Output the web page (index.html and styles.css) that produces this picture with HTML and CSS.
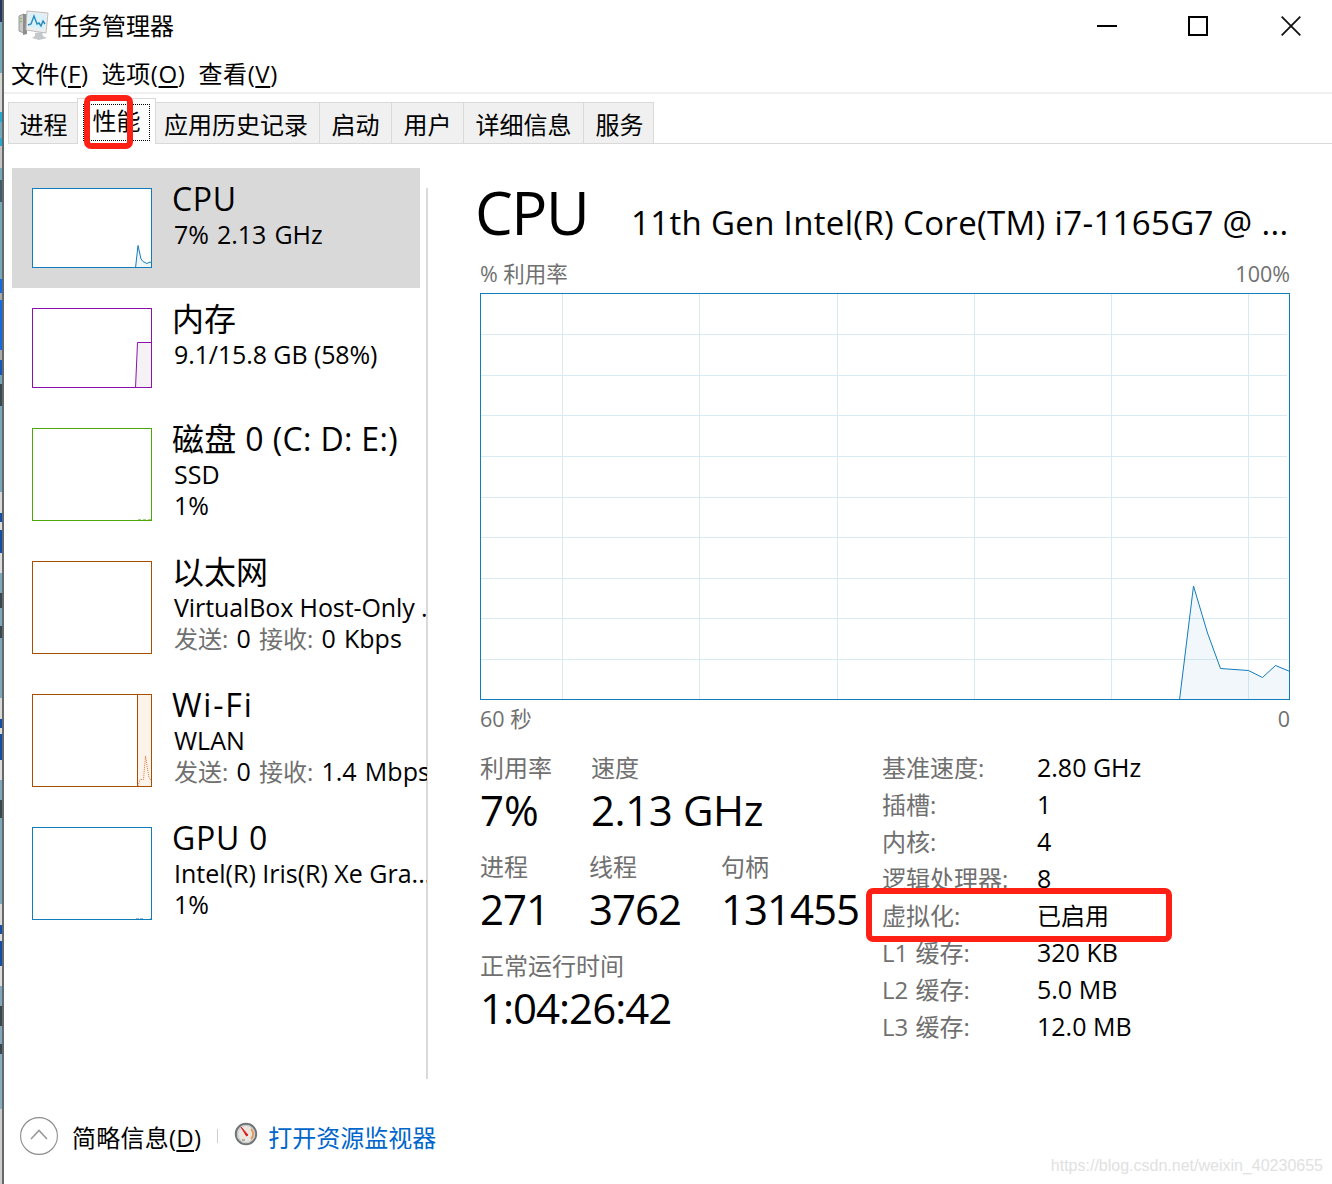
FILE: index.html
```html
<!DOCTYPE html>
<html lang="zh-CN">
  <head>
    <meta charset="UTF-8" />
    <meta name="viewport" content="width=device-width, initial-scale=1.0" />
    <title>任务管理器</title>
    <link rel="stylesheet" href="styles.css">
  </head>
  <body>
    <div class="desktop"></div>
    <div class="window">
      <header class="titlebar">
        <svg class="app-icon" width="32" height="32" viewBox="0 0 32 32">
          <path d="M1 6l5-2v19l-5-2z" fill="#c9c9c9" stroke="#999" />
          <path d="M5 4h4v20l-4 1z" fill="#8d8d8d" />
          <path d="M2 9l2-1M2 12l2-1" stroke="#73b83c" />
          <path d="M17 23l7-1 1 4 4 2-8 2-7-2 3-2z" fill="#c4c8ca" />
          <path d="M9 1l21 2-2 20-20-3z" fill="#eee" stroke="#bcbcbc" />
          <path d="M11 3l17 2-2 15-16-3z" fill="#d8f1fb" />
          <path d="M10 15l3-1 3-8 3 8 2-1 2 3 2-5 2 3" fill="none" stroke="#288bbd" stroke-width="1.4" />
        </svg>
        <span class="app-name">任务管理器</span>
        <div class="controls">
          <svg width="20" height="20"><path d="M0 10h20" stroke="#000" stroke-width="2" /></svg>
          <svg width="20" height="20"><rect x="1" y="1" width="18" height="18" fill="none" stroke="#000" stroke-width="2" /></svg>
          <svg class="close" width="20" height="20"><path d="M.7.7l18.6 18.6M19.3.7L.7 19.3" stroke="#111" stroke-width="1.8" /></svg>
        </div>
      </header>
      <nav class="menu">
        <span>文件(<u>F</u>)</span>
        <span>选项(<u>O</u>)</span>
        <span>查看(<u>V</u>)</span>
      </nav>
      <div class="tabs">
        <div class="tab processes">进程</div>
        <div class="tab active"><span class="focus">性能</span><i class="mark tab-mark"></i></div>
        <div class="tab history">应用历史记录</div>
        <div class="tab">启动</div>
        <div class="tab">用户</div>
        <div class="tab details-tab">详细信息</div>
        <div class="tab services">服务</div>
        <div class="tabs-rest"></div>
      </div>

      <div class="content">
        <aside class="sidebar">
          <div class="item selected">
            <svg class="thumb blue" width="120" height="80">
              <path class="area" d="M103.500 80L106 57.500L109 71L111 73.500L115 75.500L118 74L120 75V80z" />
              <rect x=".5" y=".5" width="119" height="79" />
            </svg>
            <div class="info">
              <h3 class="latin">CPU</h3>
              <p class="cpu">7% 2.13 GHz</p>
            </div>
          </div>
          <div class="item">
            <svg class="thumb purple" width="120" height="80">
              <path class="area" d="M103.500 80L105.500 34.500H120V80z" />
              <rect x=".5" y=".5" width="119" height="79" />
            </svg>
            <div class="info">
              <h3>内存</h3>
              <p class="memory">9.1/15.8 GB (58%)</p>
            </div>
          </div>
          <div class="item tall">
            <svg class="thumb green" width="120" height="93">
              <path d="M106 91.500h3m2 0h3m2 0h3" stroke-opacity=".5" />
              <rect x=".5" y=".5" width="119" height="92" />
            </svg>
            <div class="info">
              <h3 class="disk">磁盘 0 (C: D: E:)</h3>
              <p>SSD</p>
              <p>1%</p>
            </div>
          </div>
          <div class="item tall">
            <svg class="thumb brown" width="120" height="93">
              <rect x=".5" y=".5" width="119" height="92" />
            </svg>
            <div class="info">
              <h3>以太网</h3>
              <p class="adapter">VirtualBox Host-Only ...</p>
              <p class="traffic"><span class="cjk">发送:</span> 0 <span class="cjk">接收:</span> 0 Kbps</p>
            </div>
          </div>
          <div class="item tall">
            <svg class="thumb brown" width="120" height="93">
              <path class="area" d="M105.500 93V.5H120V93z" />
              <path class="dots" d="M106 92L108 85.500H111.500L113.500 62L117 84L119 86" />
              <rect x=".5" y=".5" width="119" height="92" />
            </svg>
            <div class="info">
              <h3 class="wifi">Wi-Fi</h3>
              <p>WLAN</p>
              <p class="traffic"><span class="cjk">发送:</span> 0 <span class="cjk">接收:</span> 1.4 Mbps</p>
            </div>
          </div>
          <div class="item tall">
            <svg class="thumb blue" width="120" height="93">
              <path d="M104 91.500h3m1 0h3m7 0h2" stroke-opacity=".5" />
              <rect x=".5" y=".5" width="119" height="92" />
            </svg>
            <div class="info">
              <h3 class="latin">GPU 0</h3>
              <p>Intel(R) Iris(R) Xe Gra...</p>
              <p>1%</p>
            </div>
          </div>
        </aside>

        <main class="performance">
          <div class="heading">
            <h1>CPU</h1>
            <h2>11th Gen Intel(R) Core(TM) i7-1165G7 @ ...</h2>
          </div>
          <div class="axis axis-top"><span>% 利用率</span><span>100%</span></div>
          <svg class="chart" width="810" height="407">
            <path class="grid" d="M82.500 0V407M219.500 0V407M357.500 0V407M494.500 0V407M631.500 0V407M768.500 0V407M0 41.500H807M0 82.500H807M0 122.500H807M0 163.500H807M0 204.500H807M0 244.500H807M0 285.500H807M0 325.500H807M0 366.500H807" />
            <path class="load" d="M699.500 407L713.500 293L727.500 340L740.500 375.500L768.500 377.500L782.500 384.500L795.500 372.500L810 378.500V407z" />
            <rect x=".5" y=".5" width="809" height="406" />
          </svg>
          <div class="axis axis-bottom"><span>60 秒</span><span>0</span></div>
          <div class="stats">
            <div class="numbers">
              <div class="row">
                <div class="stat usage"><label>利用率</label><b>7%</b></div>
                <div class="stat speed"><label>速度</label><b>2.13 GHz</b></div>
              </div>
              <div class="row">
                <div class="stat count"><label>进程</label><b>271</b></div>
                <div class="stat threads"><label>线程</label><b>3762</b></div>
                <div class="stat"><label>句柄</label><b>131455</b></div>
              </div>
              <div class="row">
                <div class="stat uptime"><label>正常运行时间</label><b>1:04:26:42</b></div>
              </div>
            </div>
            <dl class="details">
              <dt>基准速度:</dt><dd>2.80 GHz</dd>
              <dt>插槽:</dt><dd>1</dd>
              <dt>内核:</dt><dd>4</dd>
              <dt>逻辑处理器:</dt><dd>8</dd>
              <dt>虚拟化:</dt><dd class="cjk-value">已启用</dd>
              <dt>L1 缓存:</dt><dd>320 KB</dd>
              <dt>L2 缓存:</dt><dd>5.0 MB</dd>
              <dt>L3 缓存:</dt><dd>12.0 MB</dd>
              <i class="mark detail-mark"></i>
            </dl>
          </div>
        </main>
      </div>

      <footer class="footer">
        <svg width="38" height="38"><circle cx="19" cy="19" r="18.400" fill="none" stroke="#8c8c8c" stroke-width="1.100" /><path d="M11 22l8-8.500 8 8.500" fill="none" stroke="#999" stroke-width="1.600" /></svg>
        <span class="brief">简略信息(<u>D</u>)</span>
        <span class="separator"></span>
        <svg class="gauge" width="24" height="24" viewBox="0 0 24 24">
          <circle cx="12" cy="12" r="10.200" fill="#e9e7df" stroke="#6f7577" stroke-width="2" />
          <circle cx="12" cy="12" r="8.500" fill="none" stroke="#c5c9ca" />
          <path d="M17 7a7 7 0 0 1 0 10" fill="none" stroke="#e5965c" stroke-width="1.800" />
          <path d="M6 17a7 7 0 0 1 1-10" fill="none" stroke="#bbb" stroke-dasharray="1 2" />
          <path d="M7 5l7 8-1.500 1z" fill="#d92020" stroke="#d92020" />
          <path d="M8 18h3" stroke="#777" />
        </svg>
        <a class="monitor">打开资源监视器</a>
      </footer>
      <span class="watermark">https://blog.csdn.net/weixin_40230655</span>
    </div>
  </body>
</html>
```
FILE: styles.css
```css
* {
  box-sizing: border-box;
}
body {
  display: flex;
  width: 1332px;
  height: 1184px;
  margin: 0;
  overflow: hidden;
  background: #fff;
  color: #000;
  font-family: "Open Sans", "Noto Sans CJK SC", sans-serif;
  font-size: 24px;
}
h1,
h2,
h3,
p,
dl,
dd {
  margin: 0;
  font-weight: 400;
}
/* sliver of the desktop behind the window */
.desktop {
  flex: none;
  width: 4px;
  border-right: 2px solid #65696b;
  background: linear-gradient(
    #26375e 0 22px, #76aabb 22px 73px, #d7d7d2 73px 112px,
    #28a8d0 112px 122px, #76aabb 122px 138px, #28a8d0 138px 146px,
    #c6c4c1 146px 168px, #76aabb 168px 180px, #415c69 180px 202px,
    #76aabb 202px 279px, #1769df 279px 293px, #aaa 293px 300px,
    #1769df 300px 350px, #aaa 350px 360px, #1455b8 360px 375px,
    #76a5b7 375px 384px, #364850 384px 406px, #7ba7ba 406px 492px,
    #d9d9d5 492px 513px, #154ca4 513px 522px, #ddd 522px 530px,
    #154ca4 530px 553px, #ddd 553px 573px, #7fa7bb 573px 593px,
    #38464d 593px 608px, #7fa7bb 608px 626px, #38464d 626px 638px,
    #7fa7bb 638px 698px, #d9d9d5 698px 719px, #154ca4 719px 728px,
    #ddd 728px 734px, #154ca4 734px 760px, #ddd 760px 780px,
    #7fa7bb 780px 800px, #38464d 800px 818px, #7fa7bb 818px 904px,
    #d9d9d5 904px 925px, #154ca4 925px 934px, #ddd 934px 941px,
    #154ca4 941px 966px, #ddd 966px 986px, #81a7bc 986px 1006px,
    #38464d 1006px 1026px, #81a7bc 1026px 1044px, #38464d 1044px 1054px,
    #8aacc0 1054px 1109px, #cecece 1109px
  );
}
.window {
  display: flex;
  flex-direction: column;
  position: relative;
  width: 1328px;
  height: 1184px;
}
.titlebar {
  display: flex;
  flex: none;
  align-items: center;
  height: 52px;
  padding: 0 31px 0 14px;
}
.app-name {
  margin-left: 4px;
  line-height: 48px;
}
.controls {
  display: flex;
  gap: 71px;
  margin-left: auto;
}
.close {
  margin-left: 2px;
}
.menu {
  display: flex;
  flex: none;
  gap: 13px;
  height: 42px;
  padding-left: 7px;
  border-bottom: 2px solid #f0f0f0;
  letter-spacing: 0.6px;
  line-height: 44px;
}
.menu u,
.brief u {
  text-decoration-thickness: 2px;
  text-underline-offset: 3px;
}
.tabs {
  display: flex;
  flex: none;
  align-items: flex-end;
  height: 50px;
  padding-left: 4px;
}
.tab {
  width: 72px;
  height: 42px;
  border: 1px solid #d9d9d9;
  border-left: 0;
  background: #f0f0f0;
  line-height: 43px;
  text-align: center;
}
.processes {
  width: 69px;
  border-left: 1px solid #d9d9d9;
  border-right: 0;
  padding-left: 1px;
}
.active {
  position: relative;
  width: 79px;
  height: 46px;
  padding: 5px 5px 3px;
  border-left: 1px solid #d9d9d9;
  border-bottom: 0;
  background: #fff;
  line-height: 32px;
}
.focus {
  display: block;
  height: 37px;
  border: 1px dotted #000;
}
.history {
  width: 164px;
  padding-right: 3px;
}
.details-tab {
  width: 120px;
}
.services {
  width: 70px;
  padding-left: 2px;
}
.tabs-rest {
  flex: 1;
  border-bottom: 1px solid #d9d9d9;
}
.mark {
  position: absolute;
  border: 6px solid #ff2015;
  border-radius: 7px;
}
.tab-mark {
  left: 6px;
  top: -4px;
  width: 49px;
  height: 54px;
}
.content {
  display: flex;
  flex: none;
  height: 935px;
  padding-top: 24px;
}
.sidebar {
  flex: none;
  width: 424px;
  padding-left: 8px;
  background: linear-gradient(#dadada, #dadada) 422px 20px / 2px 100% no-repeat;
}
.item {
  display: flex;
  width: 415px;
  height: 120px;
  padding: 20px 0 0 20px;
}
.tall {
  height: 133px;
}
.selected {
  width: 408px;
  background: #d9d9d9;
}
.thumb {
  flex: none;
  fill: none;
  background: #fff;
  stroke: currentColor;
}
.blue {
  color: #117dbb;
}
.purple {
  color: #8b12ae;
}
.green {
  color: #4da60c;
}
.brown {
  color: #a74f01;
}
.blue .area {
  fill: #f1f6fa;
}
.purple .area {
  fill: #f4f2f4;
}
.brown .area {
  fill: #fcf3eb;
}
.dots {
  stroke: #d87942;
  stroke-dasharray: 1 1;
}
.info {
  margin: -9px 0 0 20px;
  overflow: hidden;
  white-space: nowrap;
}
.info h3 {
  font-size: 32px;
  line-height: 40px;
}
.info .latin {
  letter-spacing: 0.7px;
}
.info .wifi {
  letter-spacing: 1.8px;
}
.info .disk {
  letter-spacing: 0.35px;
}
.info p {
  padding-left: 2px;
  font-size: 25px;
  line-height: 31px;
}
.info .cpu {
  word-spacing: 1.5px;
}
.info .memory,
.info .adapter {
  letter-spacing: -0.1px;
}
.info .traffic {
  word-spacing: 1.7px;
}
.cjk {
  color: #707070;
  font-size: 24px;
}
.performance {
  width: 810px;
  margin-left: 52px;
}
.heading {
  display: flex;
  align-items: baseline;
  height: 92px;
  white-space: nowrap;
}
.heading h1 {
  width: 156px;
  margin-left: -5px;
  font-size: 60px;
  letter-spacing: -1.5px;
  line-height: 88px;
}
.heading h2 {
  font-size: 33px;
  letter-spacing: 0.33px;
}
.axis {
  display: flex;
  justify-content: space-between;
  color: #707070;
  font-size: 21.5px;
}
.axis-top {
  height: 33px;
  line-height: 27px;
}
.axis-bottom {
  height: 50px;
  line-height: 37px;
}
.chart {
  display: block;
  fill: none;
  stroke: #117dbb;
}
.chart .grid {
  stroke: #d9eaf4;
}
.chart .load {
  fill: rgba(17, 125, 187, 0.06);
}
.stats {
  display: flex;
}
.numbers {
  width: 402px;
}
.row {
  display: flex;
  height: 99px;
}
.stat label,
.stat b {
  display: block;
  font-weight: 400;
  white-space: nowrap;
}
.stat label {
  color: #707070;
  line-height: 36px;
}
.stat b {
  font-size: 42px;
  letter-spacing: -1px;
  line-height: 47px;
}
.stat.usage b {
  letter-spacing: 0;
}
.stat.speed b {
  letter-spacing: -0.4px;
}
.usage {
  width: 111px;
}
.count {
  width: 109px;
}
.threads {
  width: 132px;
}
.details {
  display: grid;
  position: relative;
  grid-template-columns: 155px 140px;
  grid-auto-rows: 37px;
  margin-top: -1px;
  line-height: 37px;
  white-space: nowrap;
}
.details dt {
  color: #707070;
  word-spacing: 1px;
}
.details dd {
  font-size: 25px;
}
.details .cjk-value {
  font-size: 24px;
}
.detail-mark {
  left: -16px;
  top: 139px;
  width: 306px;
  height: 54px;
}
.footer {
  display: flex;
  flex: none;
  align-items: center;
  height: 105px;
  padding: 9px 0 0 16px;
}
.brief {
  margin-left: 14px;
  letter-spacing: 0.25px;
}
.separator {
  width: 1px;
  height: 14px;
  margin: 0 16px;
  background: #d0d0d0;
}
.gauge {
  margin-bottom: 4px;
}
.monitor {
  margin-left: 10px;
  color: #0066cc;
}
.watermark {
  position: absolute;
  right: 9px;
  bottom: 9px;
  color: #e1e1e1;
  font: 16px "Liberation Sans", Arial, sans-serif;
}
```
